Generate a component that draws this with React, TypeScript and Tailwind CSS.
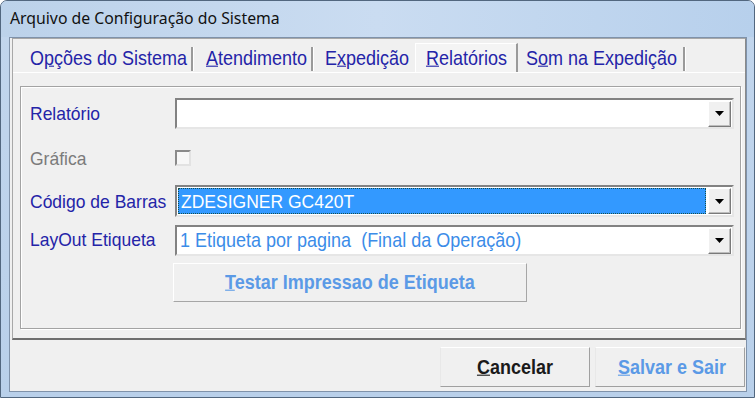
import React from "react";

const navy = "text-[#2424a8]";
// the old dialog font is a bit taller than Arial at the same width
const tall = "inline-block scale-y-[1.1]";

const Arrow = () => (
    <svg width="9" height="5" viewBox="0 0 9 5">
        <path d="M0 0 H9 L4.5 5 Z" fill="#000" />
    </svg>
);

const DropButton = () => (
    <div className="w-[23px] h-[26px] mr-[1px] flex items-center justify-center bg-[#f0f0f0] border border-t-white border-l-white border-r-[#7a7a7a] border-b-[#7a7a7a] shadow-[inset_-1px_-1px_0_#bdbdbd]">
        <Arrow />
    </div>
);

const Combo = ({ children, focused }: { children?: React.ReactNode; focused?: boolean }) => (
    <div className="w-[559px] h-full flex items-center bg-white border-2 border-t-[#828282] border-l-[#828282] border-r-[#e6e6e6] border-b-[#e6e6e6]">
        <div className="flex-1 h-full pl-[1px] py-[1px] pr-[2px]">
            {focused ? (
                <div className="h-full flex items-center bg-[#3399ff] border border-dotted border-[#13504c] pl-[2px] text-white">
                    {children}
                </div>
            ) : (
                <div className="h-full flex items-center pl-[2px]">{children}</div>
            )}
        </div>
        <DropButton />
    </div>
);

const Row = ({ label, className, labelClass, children }: { label: string; className: string; labelClass: string; children: React.ReactNode }) => (
    <div className={`flex items-center ${className}`}>
        <div className={`w-[145px] shrink-0 ${labelClass}`}>
            <span className={tall}>{label}</span>
        </div>
        {children}
    </div>
);

const App = () => {
    return (
        <div className="w-[755px] h-[398px] overflow-hidden bg-white">
            <div className="w-full h-full flex flex-col rounded-t-[7px] border border-[#52677f] bg-gradient-to-b from-[#c2d6ed] to-[#b9d0ea] font-['Liberation_Sans',Arial,sans-serif]">

                {/* title bar */}
                <div className="h-[36px] shrink-0 flex items-center pl-[9px] pb-[1px] rounded-t-[6px] bg-gradient-to-r from-[#bcd2ea] via-[#cadcf1] to-[#b7d0ec]">
                    <span className="text-[15.8px] text-[#111] font-['Noto_Sans',sans-serif]">Arquivo de Configuração do Sistema</span>
                </div>

                {/* client area */}
                <div className="ml-[8px] w-[738px] h-[355px] shrink-0 border border-[#7f92aa] bg-[#f0f0f0] flex flex-col text-[17.5px]">

                    {/* tab panel */}
                    <div className="ml-[2px] h-[302px] shrink-0 flex flex-col border-t border-l border-[#a8a8a8] border-r border-r-[#8a8a8a] border-b-2 border-b-[#6e6e6e]">

                        {/* tab strip */}
                        <div className={`h-[33px] shrink-0 flex text-[18px] ${navy}`}>
                            <div className="w-[180px] h-full flex items-center justify-between pl-[17px] pt-[5px]">
                                <span className={tall}>O<span className="underline">p</span>ções do Sistema</span>
                                <span className="w-[2px] h-[24px] mt-[2px] bg-[#9a9a9a] shadow-[1px_0_0_#fff]" />
                            </div>
                            <div className="w-[120px] h-full flex items-center justify-between pl-[13px] pt-[5px]">
                                <span className={tall}><span className="underline">A</span>tendimento</span>
                                <span className="w-[2px] h-[24px] mt-[2px] bg-[#9a9a9a] shadow-[1px_0_0_#fff]" />
                            </div>
                            <div className="w-[102px] h-full flex items-center pl-[12px] pt-[5px]">
                                <span className={tall}>E<span className="underline">x</span>pedição</span>
                            </div>
                            <div className="w-[103px] mt-[4px] flex items-center pl-[10px] pt-[1px] bg-[#f4f4f4] border-t border-l border-white border-r-2 border-r-[#9a9a9a]">
                                <span className={tall}><span className="underline">R</span>elatórios</span>
                            </div>
                            <div className="w-[167px] h-full flex items-center justify-between pl-[8px] pt-[5px]">
                                <span className={tall}>S<span className="underline">o</span>m na Expedição</span>
                                <span className="w-[2px] h-[24px] mt-[2px] bg-[#9a9a9a] shadow-[1px_0_0_#fff]" />
                            </div>
                        </div>

                        {/* tab page */}
                        <div className="flex-1 border-t border-white pl-[7px] pt-[13px]">
                            <div className="w-[721px] h-[243px] flex flex-col pl-[9px] border border-[#a3a3a3] shadow-[inset_1px_1px_0_#fff,1px_1px_0_#fff]">

                                <Row label="Relatório" className="mt-[11px] h-[31px]" labelClass={`${navy} pb-[1px]`}>
                                    <Combo />
                                </Row>

                                <Row label="Gráfica" className="mt-[13px] h-[32px]" labelClass="text-[#7b7b7b]">
                                    <div className="w-[16px] h-[16px] bg-[#f7f7f7] border-2 border-t-[#8a8a8a] border-l-[#8a8a8a] border-r-[#e2e2e2] border-b-[#e2e2e2]" />
                                </Row>

                                <Row label="Código de Barras" className="mt-[11px] h-[32px]" labelClass={`${navy} pt-[1px]`}>
                                    <Combo focused><span className={tall}>ZDESIGNER GC420T</span></Combo>
                                </Row>

                                <Row label="LayOut Etiqueta" className="mt-[8px] h-[31px]" labelClass={`${navy} pb-[3px]`}>
                                    <Combo>
                                        <span className={`${tall} text-[18px] text-[#3b8ce8]`}>1 Etiqueta por pagina&nbsp; (Final da Operação)</span>
                                    </Combo>
                                </Row>

                                <div className="mt-[7px] ml-[143px] w-[354px] h-[39px] flex items-center justify-center bg-[#f0f0f0] border border-t-white border-l-white border-r-[#a6a6a6] border-b-[#a6a6a6] font-bold text-[#5b9ae6] text-[18px]">
                                    <span className={tall}><span className="underline">T</span>estar Impressao de Etiqueta</span>
                                </div>
                            </div>
                        </div>
                    </div>

                    {/* bottom buttons */}
                    <div className="flex justify-end gap-[5px] pr-[1px] pt-[7px] text-[18px] font-bold">
                        <div className="w-[150px] h-[40px] flex items-center justify-center bg-[#f0f0f0] border border-t-white border-l-[#e8e8e8] border-r-[#a0a0a0] border-b-[#a0a0a0] text-[#1a1a1a]">
                            <span className={tall}><span className="underline">C</span>ancelar</span>
                        </div>
                        <div className="w-[150px] h-[40px] flex items-center justify-center pl-[4px] bg-[#f0f0f0] border border-t-white border-l-[#e8e8e8] border-r-[#a0a0a0] border-b-[#a0a0a0] text-[#5b9ae6]">
                            <span className={tall}><span className="underline">S</span>alvar e Sair</span>
                        </div>
                    </div>
                </div>
            </div>
        </div>
    );
};

export default App;
